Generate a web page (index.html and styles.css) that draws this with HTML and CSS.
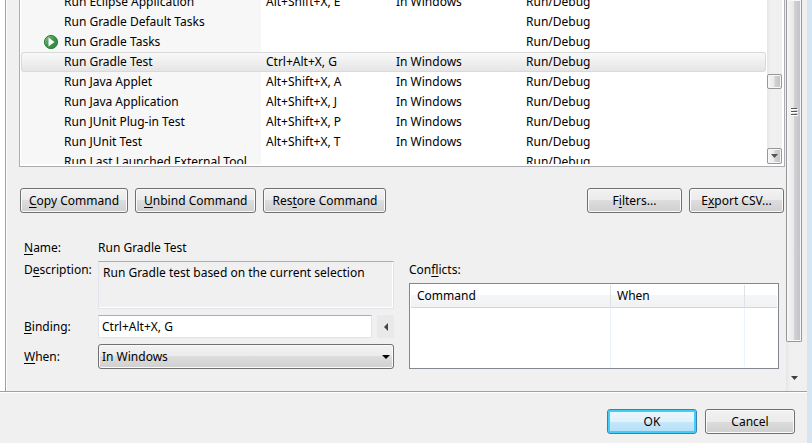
FILE: index.html
```html
<!DOCTYPE html>
<html lang="en">
<head>
<meta charset="utf-8">
<title>Preferences - Keys</title>
<link rel="stylesheet" href="styles.css">
</head>
<body>
<main class="dialog">
  <div class="page">
    <div class="content">
      <section class="commands">
        <div class="commands-view">
          <table class="commands-table">
            <colgroup><col class="col-command"><col class="col-binding"><col class="col-when"><col></colgroup>
            <tbody>
              <tr><td>Run Eclipse Application</td><td>Alt+Shift+X, E</td><td>In Windows</td><td>Run/Debug</td></tr>
              <tr><td>Run Gradle Default Tasks</td><td></td><td></td><td>Run/Debug</td></tr>
              <tr><td class="with-icon"><svg class="run-icon" width="16" height="16" viewBox="0 0 16 16" aria-hidden="true"><defs><linearGradient id="run" x1="0" y1="0" x2="1" y2="1"><stop offset="0" stop-color="#8cc98f"/><stop offset="0.5" stop-color="#3d9446"/><stop offset="1" stop-color="#2f8a3c"/></linearGradient></defs><circle cx="8" cy="8" r="6.6" fill="url(#run)" stroke="#2f7d46" stroke-width="1"/><path d="M5.5 3.5v9l6-4.500z" fill="#fff"/></svg>Run Gradle Tasks</td><td></td><td></td><td>Run/Debug</td></tr>
              <tr class="selected"><td>Run Gradle Test</td><td>Ctrl+Alt+X, G</td><td>In Windows</td><td>Run/Debug</td></tr>
              <tr><td>Run Java Applet</td><td>Alt+Shift+X, A</td><td>In Windows</td><td>Run/Debug</td></tr>
              <tr><td>Run Java Application</td><td>Alt+Shift+X, J</td><td>In Windows</td><td>Run/Debug</td></tr>
              <tr><td>Run JUnit Plug-in Test</td><td>Alt+Shift+X, P</td><td>In Windows</td><td>Run/Debug</td></tr>
              <tr><td>Run JUnit Test</td><td>Alt+Shift+X, T</td><td>In Windows</td><td>Run/Debug</td></tr>
              <tr><td>Run Last Launched External Tool</td><td></td><td></td><td>Run/Debug</td></tr>
            </tbody>
          </table>
        </div>
        <div class="scrollbar inner-scroll">
          <div class="thumb small-thumb"></div>
          <button class="thumb scroll-down" type="button" aria-label="Scroll down"><svg width="7" height="4" viewBox="0 0 7 4"><path d="M0 0h7L3.5 4z" fill="#505650"/></svg></button>
        </div>
      </section>

      <div class="actions">
        <button class="btn" type="button"><u>C</u>opy Command</button>
        <button class="btn" type="button"><u>U</u>nbind Command</button>
        <button class="btn push" type="button">Res<u>t</u>ore Command</button>
        <button class="btn mid" type="button">F<u>i</u>lters...</button>
        <button class="btn mid" type="button">E<u>x</u>port CSV...</button>
      </div>

      <div class="details">
        <form class="form">
          <span class="label"><u>N</u>ame:</span>
          <output class="name">Run Gradle Test</output>
          <label class="label" for="description">D<u>e</u>scription:</label>
          <textarea id="description" class="description" readonly>Run Gradle test based on the current selection</textarea>
          <label class="label middle" for="binding"><u>B</u>inding:</label>
          <div class="binding-row">
            <input id="binding" class="binding" type="text" value="Ctrl+Alt+X, G">
            <button class="key-menu" type="button" aria-label="Insert special key"><svg width="4" height="8" viewBox="0 0 4 8"><path d="M4 0v8L0 4z" fill="#444"/></svg></button>
          </div>
          <label class="label middle" for="when"><u>W</u>hen:</label>
          <div class="select-box">
            <select id="when" class="when"><option>In Windows</option></select>
            <svg class="select-arrow" width="8" height="4" viewBox="0 0 8 4" aria-hidden="true"><path d="M0 0h8L4 4z" fill="#000"/></svg>
          </div>
        </form>

        <section class="conflicts">
          <h2 class="conflicts-title" id="conflicts-title">Con<u>f</u>licts:</h2>
          <div class="conflicts-view">
            <table class="conflicts-table" aria-labelledby="conflicts-title">
              <colgroup><col><col class="col-conflict-when"><col class="col-rest"></colgroup>
              <thead><tr><th>Command</th><th>When</th><th></th></tr></thead>
              <tbody><tr><td></td><td></td><td></td></tr></tbody>
            </table>
          </div>
        </section>
      </div>
    </div>

    <div class="scrollbar page-scroll">
      <div class="thumb page-thumb"><svg width="7" height="9" viewBox="0 0 7 9" aria-hidden="true"><path d="M0 1.5h7M0 4.5h7M0 7.5h7" stroke="#fff"/><path d="M0 .5h6M0 3.5h6M0 6.5h6" stroke="#555"/></svg></div>
      <button class="page-down" type="button" aria-label="Scroll page down"><svg width="7" height="4" viewBox="0 0 7 4"><path d="M0 0h7L3.5 4z" fill="#404040"/></svg></button>
    </div>
  </div>

  <footer class="footer">
    <button class="btn wide default" type="button">OK</button>
    <button class="btn wide" type="button">Cancel</button>
  </footer>
</main>
</body>
</html>
```

FILE: styles.css
```css
* {
  box-sizing: border-box;
}

body {
  margin: 0;
  padding-right: 5px;
  min-height: 100vh;
  display: flex;
  background: #d7e4f1;
  color: #000;
  font: 12px/16px "Noto Sans", "Open Sans", sans-serif;
}

button,
input,
select,
textarea {
  font: inherit;
  color: inherit;
  margin: 0;
}

u {
  text-decoration-skip-ink: none;
  text-underline-offset: 2px;
}

.dialog {
  flex: 1;
  min-width: 0;
  display: flex;
  flex-direction: column;
  background: #f0f0f0;
}

.page {
  display: flex;
  padding: 0 5px;
  border-bottom: 1px solid #a0a0a0;
  box-shadow: 0 1px #fff;
  background: linear-gradient(90deg, #fff 5px, #f0f0f0 5px);
}

.content {
  flex: 1;
  min-width: 0;
  padding: 0 1px 22px 13px;
  border-left: 1px solid #a0a0a0;
  box-shadow: inset 1px 0 #fff;
}

/* Command list */
.commands {
  display: flex;
  height: 167px;
  padding: 0 2px 2px 1px;
  border: 1px solid #abadb3;
  border-top: 0;
  background: #fff;
}

.commands-view {
  flex: 1;
  min-width: 0;
  overflow: hidden;
}

.commands-table {
  width: 100%;
  margin-top: -8px;
  table-layout: fixed;
  border-spacing: 0;
}

.col-command {
  width: 240px;
}

.col-binding,
.col-when {
  width: 130px;
}

.commands-table td {
  height: 20px;
  padding: 0 5px;
  white-space: nowrap;
}

.commands-table td:first-child {
  padding: 0 0 0 43px;
  background: #f7f7f7;
}

.commands-table .with-icon:first-child {
  padding-left: 22px;
}

.run-icon {
  margin-right: 5px;
  vertical-align: top;
}

.commands-table .selected td {
  border: solid #d9d9d9;
  border-width: 1px 0;
  background: linear-gradient(#f9f9f9, #e5e5e5);
}

.commands-table .selected td:first-child {
  padding-left: 42px;
  border-left-width: 1px;
  border-radius: 3px 0 0 3px;
}

.commands-table .selected td:last-child {
  border-right-width: 1px;
  border-radius: 0 3px 3px 0;
}

/* Scroll bars */
.scrollbar {
  display: flex;
  flex-direction: column;
  background: linear-gradient(90deg, #e6e6e6, #f0f0f0 25%);
}

.thumb {
  border: 1px solid #979797;
  border-radius: 2px;
  background: linear-gradient(90deg, #f5f5f5 0, #e9e9eb 48%, #d2d2d5 52%, #c2c2c6);
  box-shadow: inset 0 0 0 1px #f8f8f8;
}

.inner-scroll {
  flex: none;
  width: 15px;
  margin-left: 1px;
  padding-top: 74px;
  justify-content: space-between;
}

.small-thumb {
  height: 15px;
}

.scroll-down {
  display: grid;
  place-items: center;
  height: 16px;
  padding: 0;
}

.page-scroll {
  flex: none;
  width: 16px;
}

.page-thumb {
  flex: 1;
  display: grid;
  place-items: center;
  padding-bottom: 116px;
  border-top: 0;
  border-radius: 0 0 2px 2px;
}

.page-down {
  display: grid;
  place-items: center;
  height: 49px;
  padding: 22px 0 0;
  border: 0;
  background: none;
}

/* Buttons */
.actions {
  display: flex;
  gap: 7px;
  margin: 21px 1px 26px;
}

.btn {
  height: 25px;
  padding: 0 8px;
  border: 1px solid #707070;
  border-radius: 3px;
  background: linear-gradient(#f2f2f2 0, #ebebeb 50%, #dddddd 50%, #cfcfcf);
  box-shadow: inset 0 0 0 1px #fafafa;
}

.push {
  margin-right: auto;
}

.mid {
  width: 95px;
  padding: 0;
}

.wide {
  width: 90px;
}

.default {
  border-color: #3c7fb1;
  background: linear-gradient(#ebf6fd 0, #e0f2fc 50%, #c6e8fb 50%, #b2def6);
  box-shadow: inset 0 0 0 2px #40cdf6;
}

/* Details */
.details {
  display: flex;
  gap: 15px;
  padding: 0 6px 0 5px;
}

.form {
  flex: 1 1 0;
  min-width: 0;
  display: grid;
  grid-template-columns: 74px minmax(0, 1fr);
  grid-template-rows: 16px 48px 23px 25px;
  row-gap: 6px;
  align-content: start;
}

.label,
.name,
.conflicts-title {
  line-height: 18px;
  white-space: nowrap;
}

.middle {
  align-self: center;
}

.description {
  display: block;
  width: 100%;
  height: 48px;
  padding: 3px 4px;
  border: 1px solid #e3e3eb;
  border-top-color: #abadb3;
  background: #f0f0f0;
  box-shadow: inset -1px -1px #fff;
  resize: none;
  overflow: hidden;
  outline: 0;
}

.binding-row {
  display: flex;
  align-items: center;
  gap: 5px;
}

.binding {
  flex: 1;
  min-width: 0;
  height: 23px;
  padding: 0 3px;
  border: 1px solid #e2e3ea;
  border-top-color: #abadb3;
  border-radius: 1px;
  background: #fff;
}

.key-menu {
  display: grid;
  place-items: center;
  width: 17px;
  height: 23px;
  padding: 0;
  border: 0;
  background: #e9e9e9;
}

.select-box {
  position: relative;
}

.when {
  display: block;
  width: 100%;
  height: 25px;
  padding: 0 3px;
  border: 1px solid #707070;
  border-radius: 3px;
  appearance: none;
  background: linear-gradient(#f2f2f2 0, #ebebeb 50%, #dddddd 50%, #cfcfcf);
  box-shadow: inset 0 0 0 1px #fafafa;
}

.select-arrow {
  position: absolute;
  top: 11px;
  right: 4px;
  pointer-events: none;
}

.conflicts {
  flex: 1 1 0;
  min-width: 0;
  display: flex;
  flex-direction: column;
  padding-top: 22px;
}

.conflicts-title {
  margin: 0 0 4px;
  font-size: 12px;
  font-weight: 400;
}

.conflicts-view {
  flex: 1;
  display: flex;
  padding: 1px;
  border: 1px solid #828790;
  background: #fff;
}

.conflicts-table {
  width: 100%;
  table-layout: fixed;
  border-spacing: 0;
}

.col-conflict-when {
  width: 134px;
}

.col-rest {
  width: 32px;
}

.conflicts-table th {
  height: 23px;
  padding: 0 6px;
  border-right: 1px solid #e0e1e3;
  border-bottom: 1px solid #d5d5d5;
  background: linear-gradient(#fff 45%, #f5f6f8 45%, #f1f2f4);
  font-weight: 400;
  text-align: left;
}

.conflicts-table td {
  border-right: 1px solid #edf3fc;
}

.conflicts-table th:last-child,
.conflicts-table td:last-child {
  border-right: 0;
}

/* Footer */
.footer {
  display: flex;
  justify-content: flex-end;
  gap: 8px;
  padding: 17px 12px 9px;
}
```
